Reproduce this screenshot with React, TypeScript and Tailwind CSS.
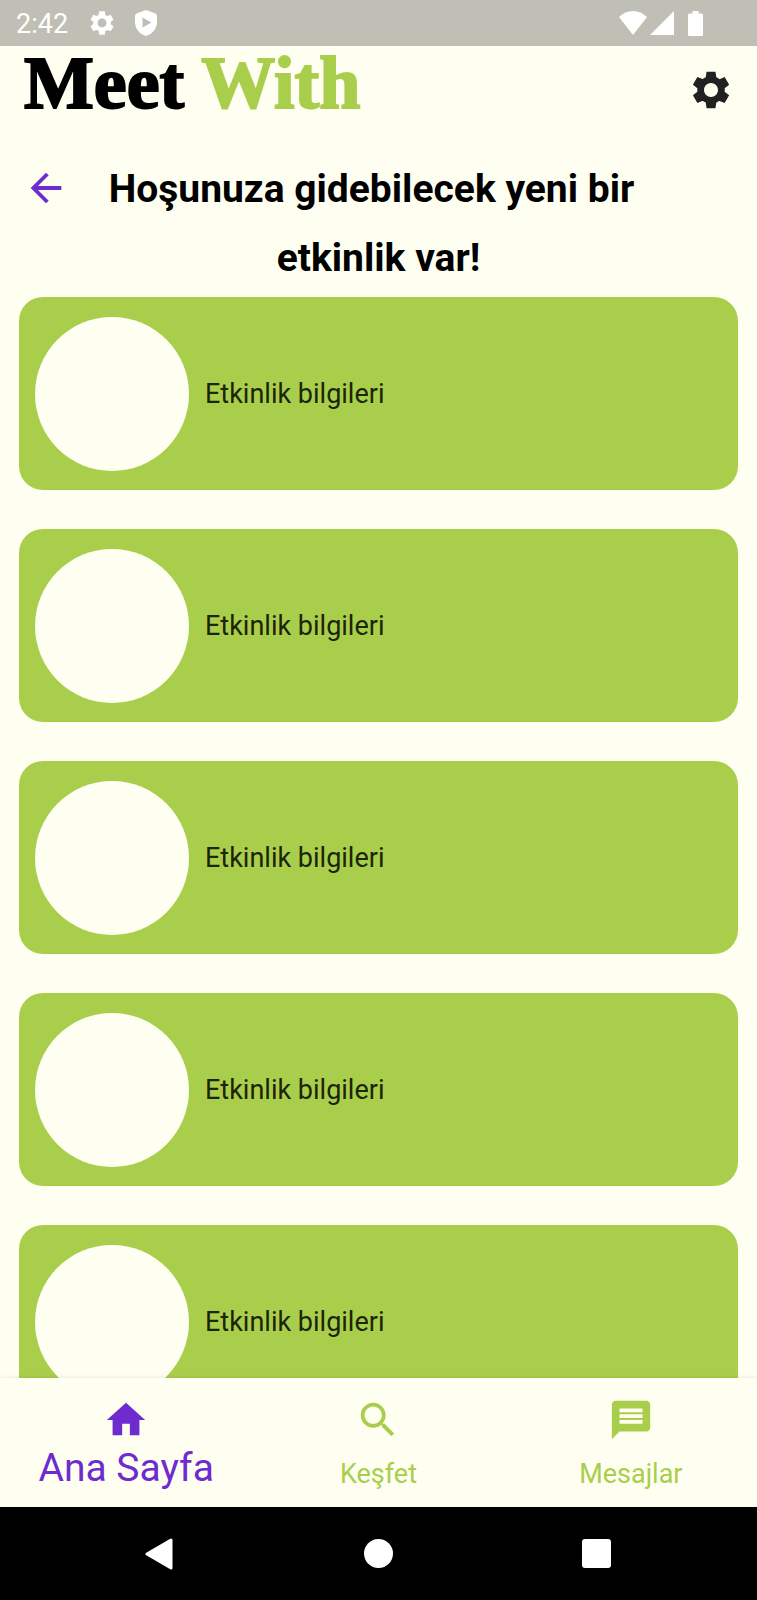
import type { ReactNode } from "react";

const events = [1, 2, 3, 4, 5].map((id) => ({ id, label: "Etkinlik bilgileri" }));

const gearPath =
  "M19.44 12.99l.01-.02c.04-.32.06-.64.06-.97 0-.33-.03-.66-.06-.97l.01.02 2.44-1.92-2.43-4.22-2.87 1.16.01.01c-.52-.4-1.09-.74-1.71-1h.01L14.44 2H9.57l-.44 3.07h.01c-.62.26-1.19.6-1.71 1l.01-.01-2.88-1.17-2.44 4.22 2.44 1.92.01-.02c-.03.32-.06.65-.06.98 0 .33.02.66.06.97l-.01-.02-2.1 1.65-.33.26 2.43 4.2 2.88-1.15-.02-.04c.53.41 1.1.75 1.73 1.01h-.03L9.58 22h4.85s.03-.18.06-.42l.38-2.65h-.01c.62-.26 1.2-.6 1.73-1.01l-.02.04 2.88 1.15 2.43-4.2s-.14-.12-.33-.26l-2.11-1.66zM12 15.8c-2.090 0-3.800-1.710-3.800-3.800s1.710-3.800 3.800-3.800 3.800 1.710 3.800 3.800-1.710 3.800-3.800 3.800z";
const backPath = "M20 11H7.830l5.590-5.590L12 4l-8 8 8 8 1.410-1.410L7.830 13H20v-2z";
const homePath = "M10 20v-6h4v6h5v-8h3L12 3 2 12h3v8z";
const searchPath =
  "M15.500 14h-.79l-.28-.27C15.410 12.590 16 11.110 16 9.500 16 5.910 13.090 3 9.500 3S3 5.910 3 9.500 5.910 16 9.500 16c1.610 0 3.090-.59 4.230-1.570l.27.28v.79l5 4.990L20.490 19l-4.990-5zm-6 0C7.010 14 5 11.990 5 9.500S7.010 5 9.500 5 14 7.010 14 9.500 11.990 14 9.500 14z";
const messagePath =
  "M20 2H4c-1.100 0-1.990.9-1.990 2L2 22l4-4h14c1.100 0 2-.9 2-2V4c0-1.100-.9-2-2-2zm-2 12H6v-2h12v2zm0-3H6V9h12v2zm0-3H6V6h12v2z";

function Icon({ path, className }: { path: string; className: string }) {
  return (
    <svg viewBox="0 0 24 24" className={className} aria-hidden="true">
      <path fill="currentColor" d={path} />
    </svg>
  );
}

function StatusBar() {
  return (
    <div className="flex h-[46px] shrink-0 items-center bg-[#bfbfb6] pl-4 pr-[54px] text-white">
      <span className="pt-[2px] text-[27px] leading-[44px]">2:42</span>
      <Icon path={gearPath} className="ml-5 size-7" />
      <svg viewBox="0 0 22 26" className="ml-[19px] h-[26px] w-[22px]" aria-hidden="true">
        <path
          fillRule="evenodd"
          fill="currentColor"
          d="M11 0 20.500 3.500Q22 4 22 6V12c0 6.500-4.500 12-11 14C4.500 24 0 18.500 0 12V6Q0 4 1.500 3.500ZM7.500 7.500v10L16.500 12.500Z"
        />
      </svg>
      <div className="ml-auto flex items-center">
        <svg viewBox="0 0 28 24" className="h-6 w-7" aria-hidden="true">
          <path fill="currentColor" d="M0 6C8-2 20-2 28 6L14 24Z" />
        </svg>
        <svg viewBox="0 0 24 24" className="ml-[3px] size-6" aria-hidden="true">
          <path fill="currentColor" d="M24 0v24H0Z" />
        </svg>
        <svg viewBox="0 0 15 25" className="ml-[14px] h-[25px] w-[15px]" aria-hidden="true">
          <path
            fill="currentColor"
            d="M4.500 0h6v2.500h3Q15 2.500 15 4v19.500Q15 25 13.500 25h-12Q0 25 0 23.500V4Q0 2.500 1.500 2.500h3Z"
          />
        </svg>
      </div>
    </div>
  );
}

function AppHeader() {
  return (
    <header className="flex h-[88px] shrink-0 items-center justify-between pl-6 pr-6">
      <div className="self-start font-['Liberation_Serif',serif] text-[74px] font-bold leading-[74px] text-black [-webkit-text-stroke:2px_currentColor]">
        Meet <span className="text-[#a9ce4c]">With</span>
      </div>
      <button type="button" aria-label="Ayarlar" className="text-[#212121]">
        <Icon path={gearPath} className="size-11" />
      </button>
    </header>
  );
}

function EventCard({ label }: { label: string }) {
  return (
    <li className="flex h-[193px] shrink-0 items-center gap-4 rounded-3xl bg-[#a9ce4c] px-4">
      <div className="size-[154px] shrink-0 rounded-full bg-[#fffff1]" />
      <p className="text-[27px] leading-8 text-[#1d2507]">{label}</p>
    </li>
  );
}

function NavLink({ href, path, children }: { href: string; path: string; children: ReactNode }) {
  return (
    <a href={href} className="flex flex-col items-center gap-3">
      <Icon path={path} className="size-[46px]" />
      <span className="text-[27px] leading-[38px]">{children}</span>
    </a>
  );
}

function BottomNav() {
  return (
    <nav className="grid h-[129px] shrink-0 grid-cols-3 bg-[#fffff1] pt-[19px] text-[#a9ce4c] shadow-[0_-1px_3px_rgba(0,0,0,0.08)]">
      <a href="#home" aria-current="page" className="flex flex-col items-center text-[#6d2bd0]">
        <Icon path={homePath} className="size-[46px]" />
        <span className="text-[39px] leading-[50px]">Ana Sayfa</span>
      </a>
      <NavLink href="#explore" path={searchPath}>
        Keşfet
      </NavLink>
      <NavLink href="#messages" path={messagePath}>
        Mesajlar
      </NavLink>
    </nav>
  );
}

function SystemBar() {
  return (
    <div className="flex h-[93px] shrink-0 items-center justify-center gap-[189px] bg-black pr-[2px] text-white">
      <button type="button" aria-label="Geri">
        <svg viewBox="0 0 30 32" className="h-8 w-[30px]">
          <path
            fill="currentColor"
            stroke="currentColor"
            strokeWidth="3"
            strokeLinejoin="round"
            d="M26 2v28L2 16Z"
          />
        </svg>
      </button>
      <button type="button" aria-label="Ana ekran" className="size-[29px] rounded-full bg-white" />
      <button type="button" aria-label="Son uygulamalar" className="size-[29px] rounded-[3px] bg-white" />
    </div>
  );
}

export default function App() {
  return (
    <div className="flex h-screen flex-col bg-[#fffff1] font-[Roboto,sans-serif]">
      <StatusBar />
      <AppHeader />
      <main className="flex min-h-0 flex-1 flex-col">
        <div className="grid shrink-0 grid-cols-[92px_1fr_92px] pb-1 pt-[19px]">
          <button
            type="button"
            aria-label="Geri dön"
            className="flex h-[69px] items-center justify-center text-[#6d2bd0]"
          >
            <Icon path={backPath} className="size-[46px]" />
          </button>
          <h1 className="pt-[2px] text-center text-[39px] font-bold leading-[69px] text-black">
            <span className="block pr-[14px]">Hoşunuza gidebilecek yeni bir </span>
            <span className="block">etkinlik var!</span>
          </h1>
        </div>
        <ul className="flex min-h-0 flex-1 flex-col gap-[39px] overflow-y-auto px-[19px] [scrollbar-width:none]">
          {events.map((event) => (
            <EventCard key={event.id} label={event.label} />
          ))}
        </ul>
      </main>
      <BottomNav />
      <SystemBar />
    </div>
  );
}
